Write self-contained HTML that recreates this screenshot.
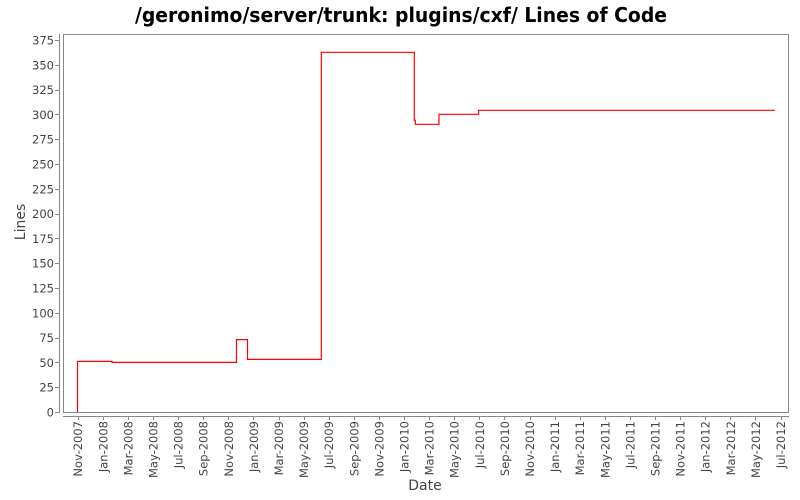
<!DOCTYPE html>
<html><head><meta charset="utf-8"><style>html,body{margin:0;padding:0;background:#fff}svg{display:block}</style></head>
<body>
<svg width="800" height="500" xmlns="http://www.w3.org/2000/svg" font-family="DejaVu Sans, Liberation Sans, sans-serif">
<rect width="800" height="500" fill="#fff"/>
<text x="401" y="22" text-anchor="middle" font-size="20" font-weight="bold" textLength="532" lengthAdjust="spacingAndGlyphs" fill="#000">/geronimo/server/trunk: plugins/cxf/ Lines of Code</text>
<rect x="63.5" y="34.5" width="725" height="378" fill="#fff" stroke="#888" stroke-width="1"/>
<line x1="59.5" y1="34" x2="59.5" y2="413" stroke="#888"/>
<line x1="63" y1="416.5" x2="789" y2="416.5" stroke="#888"/>
<g font-size="11.5" fill="#444" text-anchor="end" id="yl"></g>
<g stroke="#888" id="yt"></g>
<g font-size="11.5" fill="#444" id="xl"></g>
<g stroke="#888" id="xt"></g>
<polyline fill="none" stroke="#f00" stroke-width="1.2" points="77.5,412 77.5,361.4 112,361.4 112,362.4 236.5,362.4 236.5,339.6 247.5,339.6 247.5,359.4 321.3,359.4 321.3,52.3 414.3,52.3 414.3,120.3 415.3,120.3 415.3,124.3 439,124.3 439,114.3 478.7,114.3 478.7,110.3 775,110.3"/>
<text font-size="14" fill="#444" text-anchor="middle" transform="translate(25,222) rotate(-90)">Lines</text>
<text x="425" y="490" font-size="14" fill="#444" text-anchor="middle">Date</text>
<script>
var ns="http://www.w3.org/2000/svg";
var yl=document.getElementById('yl'),yt=document.getElementById('yt');
for(var v=0;v<=375;v+=25){var y=412-v*0.992;
var t=document.createElementNS(ns,'text');t.setAttribute('x',54);t.setAttribute('y',y+4.5);t.textContent=v;yl.appendChild(t);
var l=document.createElementNS(ns,'line');l.setAttribute('x1',55);l.setAttribute('x2',59);l.setAttribute('y1',Math.round(y)+0.5);l.setAttribute('y2',Math.round(y)+0.5);yt.appendChild(l);}
var m=['Jan','Mar','May','Jul','Sep','Nov'];var xl=document.getElementById('xl'),xt=document.getElementById('xt');
for(var i=0;i<=28;i++){var mi=(5+i)%6,yr=2007+Math.floor((5+i)/6);var x=77.7+i*25.1;
var t=document.createElementNS(ns,'text');t.setAttribute('text-anchor','end');t.setAttribute('transform','translate('+(x+4.5)+',421) rotate(-90)');t.textContent=m[mi]+'-'+yr;xl.appendChild(t);
var l=document.createElementNS(ns,'line');l.setAttribute('x1',Math.round(x)+0.5);l.setAttribute('x2',Math.round(x)+0.5);l.setAttribute('y1',417);l.setAttribute('y2',420);xt.appendChild(l);}
</script>
</svg>
</body></html>
